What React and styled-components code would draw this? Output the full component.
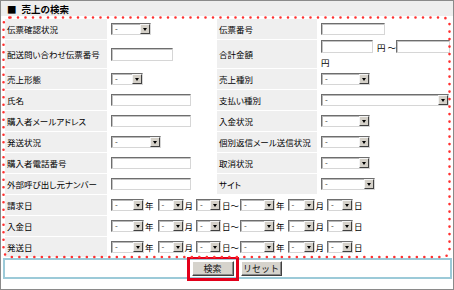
import React from 'react';
import styled, { createGlobalStyle } from 'styled-components';

const GlobalStyle = createGlobalStyle`
  html, body {
    margin: 0;
    padding: 0;
    background: #fff;
  }
  body {
    font-family: "Noto Sans CJK JP", "Noto Sans", sans-serif;
  }
`;

const Panel = styled.div`
  box-sizing: border-box;
  width: 454px;
  height: 290px;
  border: 1px solid #8a8a8a;
  background: #fff;
  color: #000;
  font-size: 8.5px;
  font-feature-settings: "palt";
  display: flex;
  flex-direction: column;
`;

const Header = styled.div`
  height: 15px;
  background: #eeeeee;
  font-weight: bold;
  font-size: 9.5px;
  color: #000;
  display: flex;
  align-items: center;
  gap: 5px;
  padding-left: 6px;
`;

const FormArea = styled.div`
  position: relative;
  margin: 3px 3px 0 4px;
`;

const Grid = styled.div`
  display: grid;
  grid-template-columns: 102px 108px 100px 1fr;
  grid-auto-rows: minmax(20px, auto);
  gap: 1px;
`;

const Label = styled.div`
  background: #efefef;
  display: flex;
  align-items: center;
  padding-left: 2px;
  white-space: nowrap;
`;

const Field = styled.div`
  background: #fff;
  display: flex;
  flex-direction: ${(p) => (p.$stack ? 'column' : 'row')};
  align-items: ${(p) => (p.$stack ? 'flex-start' : 'center')};
  justify-content: ${(p) => (p.$stack ? 'center' : 'flex-start')};
  gap: ${(p) => (p.$stack ? '3px' : '0')};
  padding-left: 3px;
  grid-column: span ${(p) => p.$span || 1};
  white-space: nowrap;
`;

const Line = styled.div`
  display: flex;
  align-items: center;
`;

const TextInput = styled.input`
  box-sizing: border-box;
  width: ${(p) => p.$w}px;
  height: ${(p) => p.$h || 12}px;
  margin: 0;
  padding: 0 2px;
  border: 1px solid;
  border-color: #6e6e6e #d6d6d6 #d6d6d6 #6e6e6e;
  box-shadow: inset 1px 1px 0 #c4c4c4;
  background: #fff;
  font-size: 8px;
`;

const SelectBox = styled.span`
  box-sizing: border-box;
  display: inline-flex;
  align-items: stretch;
  width: ${(p) => p.$w}px;
  height: 12px;
  border: 1px solid;
  border-color: #6e6e6e #d6d6d6 #d6d6d6 #6e6e6e;
  box-shadow: inset 1px 1px 0 #b8b8b8;
  background: #fff;
`;

const SelectValue = styled.span`
  flex: 1;
  padding-left: 3px;
  font-size: 8px;
  line-height: 10px;
  color: #333;
`;

const SelectArrow = styled.span`
  box-sizing: border-box;
  width: 10px;
  background: #d4d0c8;
  border: 1px solid;
  border-color: #f4f4f4 #404040 #404040 #f4f4f4;
  display: flex;
  align-items: center;
  justify-content: center;

  &::after {
    content: "";
    border-left: 2.5px solid transparent;
    border-right: 2.5px solid transparent;
    border-top: 3px solid #000;
  }
`;

const Unit = styled.span`
  margin: 0 ${(p) => p.$after || 0}px 0 ${(p) => p.$before || 1}px;
`;

const DotsOverlay = styled.svg`
  position: absolute;
  left: -3px;
  top: -3px;
  pointer-events: none;
`;

const ButtonBar = styled.div`
  box-sizing: border-box;
  height: 21px;
  margin: 1px 1px 0 2px;
  border: 2px solid #9ccad8;
  display: flex;
  align-items: center;
  justify-content: center;
  gap: 7px;
  padding-left: 18px;
`;

const Button = styled.button`
  box-sizing: border-box;
  width: ${(p) => p.$w}px;
  height: 15px;
  padding: 0;
  font-family: inherit;
  font-size: 9px;
  line-height: 13px;
  color: #111;
  background: #d6d3cc;
  border: 1px solid;
  border-color: #fff #404040 #404040 #fff;
  box-shadow: inset -1px -1px 0 #8a8a8a;
  ${(p) => p.$marked && 'outline: 3px solid #e3001b; outline-offset: 2px;'}
`;

const Select = ({ w }) => (
  <SelectBox $w={w} role="combobox">
    <SelectValue>-</SelectValue>
    <SelectArrow />
  </SelectBox>
);

const DateRange = () => (
  <>
    <Select w={33} />
    <Unit $after={4}>年</Unit>
    <Select w={26} />
    <Unit $after={3}>月</Unit>
    <Select w={25} />
    <Unit $after={1}>日～</Unit>
    <Select w={35} />
    <Unit $after={3}>年</Unit>
    <Select w={27} />
    <Unit $after={3}>月</Unit>
    <Select w={26} />
    <Unit>日</Unit>
  </>
);

const App = () => {
  return (
    <>
      <GlobalStyle />
      <Panel>
        <Header>
          <span>■</span>
          <span>売上の検索</span>
        </Header>
        <FormArea>
          <Grid>
            <Label>伝票確認状況</Label>
            <Field><Select w={40} /></Field>
            <Label>伝票番号</Label>
            <Field><TextInput $w={64} /></Field>

            <Label>配送問い合わせ伝票番号</Label>
            <Field><TextInput $w={62} $h={13} /></Field>
            <Label>合計金額</Label>
            <Field $stack>
              <Line>
                <TextInput $w={52} $h={13} />
                <Unit $before={4}>円</Unit>
                <Unit $before={2}>～</Unit>
                <TextInput $w={54} $h={13} />
              </Line>
              <Line>円</Line>
            </Field>

            <Label>売上形態</Label>
            <Field><Select w={32} /></Field>
            <Label>売上種別</Label>
            <Field><Select w={49} /></Field>

            <Label>氏名</Label>
            <Field><TextInput $w={80} /></Field>
            <Label>支払い種別</Label>
            <Field><Select w={128} /></Field>

            <Label>購入者メールアドレス</Label>
            <Field><TextInput $w={80} /></Field>
            <Label>入金状況</Label>
            <Field><Select w={49} /></Field>

            <Label>発送状況</Label>
            <Field><Select w={50} /></Field>
            <Label>個別返信メール送信状況</Label>
            <Field><Select w={49} /></Field>

            <Label>購入者電話番号</Label>
            <Field><TextInput $w={80} /></Field>
            <Label>取消状況</Label>
            <Field><Select w={49} /></Field>

            <Label>外部呼び出し元ナンバー</Label>
            <Field><TextInput $w={80} /></Field>
            <Label>サイト</Label>
            <Field><Select w={54} /></Field>

            <Label>請求日</Label>
            <Field $span={3}><DateRange /></Field>

            <Label>入金日</Label>
            <Field $span={3}><DateRange /></Field>

            <Label>発送日</Label>
            <Field $span={3}><DateRange /></Field>
          </Grid>
          <DotsOverlay width="450" height="244" viewBox="0 0 450 244">
            <rect
              x="1.5"
              y="1.5"
              width="446"
              height="239.5"
              rx="7"
              fill="none"
              stroke="#ff3030"
              strokeWidth="2.6"
              strokeLinecap="round"
              strokeDasharray="0 7.5"
            />
          </DotsOverlay>
        </FormArea>
        <ButtonBar>
          <Button $w={42} $marked>検索</Button>
          <Button $w={41}>リセット</Button>
        </ButtonBar>
      </Panel>
    </>
  );
};

export default App;
